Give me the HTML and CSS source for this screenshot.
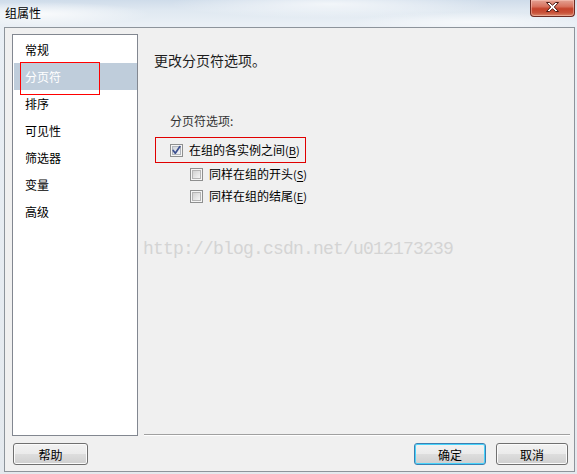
FILE: index.html
```html
<!DOCTYPE html>
<html lang="zh-CN">
<head>
<meta charset="utf-8">
<title>组属性</title>
<link rel="stylesheet" href="styles.css">
</head>
<body>
<div class="frame">
  <div class="titlebar">
    <span class="title">组属性</span>
    <button class="close" aria-label="关闭">
      <svg width="45" height="17" viewBox="0 0 45 17">
        <path d="M16.5 3.5 L19.5 3.5 L22.5 6.2 L25.5 3.5 L28.5 3.5 L24.3 8 L28.5 12.5 L25.5 12.5 L22.5 9.8 L19.5 12.5 L16.5 12.5 L20.7 8 Z" fill="#ffffff" stroke="#4a1a14" stroke-width="1" stroke-linejoin="round"/>
      </svg>
    </button>
  </div>
  <div class="client">
    <div class="main">
      <ul class="nav">
        <li class="nav-item">常规</li>
        <li class="nav-item selected annotated">分页符</li>
        <li class="nav-item">排序</li>
        <li class="nav-item">可见性</li>
        <li class="nav-item">筛选器</li>
        <li class="nav-item">变量</li>
        <li class="nav-item">高级</li>
      </ul>
      <div class="panel">
        <div class="heading">更改分页符选项。</div>
        <div class="group-label">分页符选项:</div>
        <div class="mark-box">
          <label class="check-row">
            <svg class="cb" width="13" height="13" viewBox="0 0 13 13">
              <defs>
                <linearGradient id="gc" x1="0" y1="0" x2="1" y2="1">
                  <stop offset="0" stop-color="#cdd1d8"/>
                  <stop offset="1" stop-color="#f7f7f8"/>
                </linearGradient>
              </defs>
              <rect x="0.5" y="0.5" width="12" height="12" fill="#f5f5f5" stroke="#8e8f8f"/>
              <rect x="2.5" y="2.5" width="8" height="8" fill="url(#gc)" stroke="#b1b5bb"/>
              <path d="M3.2 6.4 L5.3 9.2 L9.9 2.6" fill="none" stroke="#3c5090" stroke-width="1.7" stroke-linecap="round" stroke-linejoin="round"/>
            </svg>
            <span>在组的各实例之间<span class="acc">(<u>B</u>)</span></span>
          </label>
        </div>
        <label class="check-row sub">
          <svg class="cb" width="13" height="13" viewBox="0 0 13 13">
            <defs>
              <linearGradient id="gu" x1="0" y1="0" x2="1" y2="1">
                <stop offset="0" stop-color="#cfcfcf"/>
                <stop offset="1" stop-color="#f7f7f7"/>
              </linearGradient>
            </defs>
            <rect x="0.5" y="0.5" width="12" height="12" fill="#f5f5f5" stroke="#8e8f8f"/>
            <rect x="2.5" y="2.5" width="8" height="8" fill="url(#gu)" stroke="#b4b4b4"/>
          </svg>
          <span>同样在组的开头<span class="acc">(<u>S</u>)</span></span>
        </label>
        <label class="check-row sub">
          <svg class="cb" width="13" height="13" viewBox="0 0 13 13">
            <rect x="0.5" y="0.5" width="12" height="12" fill="#f5f5f5" stroke="#8e8f8f"/>
            <rect x="2.5" y="2.5" width="8" height="8" fill="url(#gu)" stroke="#b4b4b4"/>
          </svg>
          <span>同样在组的结尾<span class="acc">(<u>E</u>)</span></span>
        </label>
        <div class="watermark">http://blog.csdn.net/u012173239</div>
      </div>
    </div>
    <div class="buttons">
      <button class="btn help">帮助</button>
      <div class="spacer"></div>
      <button class="btn default">确定</button>
      <button class="btn">取消</button>
    </div>
  </div>
</div>
</body>
</html>
```
FILE: styles.css
```css
* { box-sizing: border-box; }
html, body { margin: 0; padding: 0; }
body {
  width: 577px;
  height: 474px;
  overflow: hidden;
  font-family: "Noto Sans CJK SC", "Microsoft YaHei", sans-serif;
  font-size: 12px;
  color: #000;
}
.frame {
  width: 577px;
  height: 474px;
  display: flex;
  flex-direction: column;
  background:
    radial-gradient(ellipse 160px 14px at 330px 4px, rgba(255,255,255,0.7), rgba(255,255,255,0) 100%),
    radial-gradient(ellipse 120px 10px at 470px 22px, rgba(255,255,255,0.6), rgba(255,255,255,0) 100%),
    radial-gradient(ellipse 110px 12px at 40px 14px, rgba(255,255,255,0.8), rgba(255,255,255,0) 100%),
    linear-gradient(to bottom, #cfdcea 0px, #dfe8f1 10px, #e9eff5 24px, #e4e9ee 100%);
}
.titlebar {
  height: 27px;
  flex: none;
  display: flex;
  align-items: flex-start;
}
.title {
  padding-left: 5px;
  line-height: 26px;
  font-size: 12px;
  color: #000;
}
.close {
  margin-left: auto;
  margin-right: 2px;
  width: 45px;
  height: 17px;
  padding: 0;
  border: 1px solid #6d2b22;
  border-top: none;
  border-radius: 0 0 4px 4px;
  background: linear-gradient(to bottom, #e4a293 0%, #d8735f 40%, #c4432b 55%, #c9533a 80%, #d98a6d 100%);
  box-shadow: inset 0 0 0 1px rgba(255,210,200,0.45);
  display: flex;
  align-items: center;
  justify-content: center;
}
.close svg { display: block; margin: -1px -1px 0; }
.client {
  margin: 0 2px 2px 4px;
  height: 445px;
  border: 1px solid #8d949b;
  background: #f0f0f0;
  display: flex;
  flex-direction: column;
  padding: 6px 0 0 7px;
}
.main {
  display: flex;
  height: 402px;
  flex: none;
}
.nav {
  list-style: none;
  margin: 0;
  width: 126px;
  height: 402px;
  border: 1px solid #828790;
  background: #fff;
  padding: 1px 0 0 1px;
}
.nav-item {
  height: 27px;
  line-height: 27px;
  padding-left: 11px;
  font-size: 12px;
  position: relative;
}
.nav-item.selected {
  background: #bfcddb;
  color: #fff;
}
.annotated::after {
  content: "";
  position: absolute;
  left: 6px;
  top: -1px;
  width: 78px;
  height: 31px;
  border: 1px solid #ff0000;
}
.panel {
  margin-left: 6px;
  width: 426px;
  height: 401px;
  border-bottom: 1px solid #a0a0a0;
  box-shadow: 0 1px 0 #ffffff;
  padding: 16px 0 0 10px;
  display: flex;
  flex-direction: column;
  align-items: flex-start;
}
.heading {
  font-size: 14px;
  line-height: 20px;
  color: #1e1e1e;
}
.group-label {
  margin-top: 43px;
  margin-left: 16px;
  line-height: 16px;
  color: #333;
}
.mark-box {
  margin-top: 8px;
  margin-left: 1px;
  width: 151px;
  height: 26px;
  border: 1px solid #e00000;
  padding-left: 14px;
  display: flex;
  align-items: center;
}
.check-row {
  display: flex;
  align-items: center;
  gap: 6px;
  height: 22px;
  line-height: 16px;
  white-space: nowrap;
}
.check-row.sub {
  margin-left: 36px;
}
.cb { display: block; flex: none; }
.acc { font-size: 11px; }
.acc u { text-decoration-thickness: 1px; text-underline-offset: 2px; }
.watermark {
  margin-top: 32px;
  margin-left: -11px;
  font-family: "Liberation Mono", "DejaVu Sans Mono", monospace;
  font-size: 18px;
  letter-spacing: -0.8px;
  line-height: 20px;
  color: #d4d4d4;
  white-space: nowrap;
}
.buttons {
  display: flex;
  align-items: center;
  margin-top: 7px;
  padding-left: 1px;
  padding-right: 6px;
  gap: 10px;
}
.spacer { flex: 1; }
.btn {
  height: 22px;
  width: 72px;
  padding: 0;
  font-family: inherit;
  font-size: 12px;
  color: #000;
  border: 1px solid #707070;
  border-radius: 3px;
  background: linear-gradient(to bottom, #f2f2f2 0%, #ebebeb 48%, #dddddd 52%, #cfcfcf 100%);
  box-shadow: inset 0 0 0 1px #fbfbfb;
}
.btn.help { width: 75px; }
.btn.default {
  border-color: #3c7fb1;
  box-shadow: inset 0 0 0 1px #48d3fb;
}
```
